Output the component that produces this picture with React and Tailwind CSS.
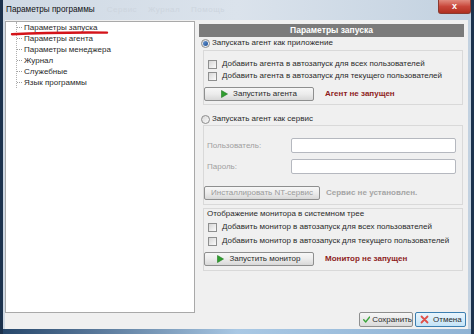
import React from 'react'

const Play = () => (
  <svg width="7" height="8" viewBox="0 0 7 8" className="mr-[5px]">
    <path d="M0.5 0.5 L6.5 4 L0.5 7.5 Z" fill="#2f9e2f" stroke="#1f7a1f" strokeWidth="0.6" />
  </svg>
)

function Radio({ checked, label }) {
  return (
    <div className="h-[12px] flex items-center pl-[3px]">
      <span className="w-[9px] h-[9px] rounded-full border border-[#8c8c8c] bg-gradient-to-br from-[#d9d9d9] to-[#fafafa] flex items-center justify-center mr-[2px]">
        {checked && <span className="w-[5px] h-[5px] rounded-full bg-gradient-to-br from-[#6a9ad6] to-[#1e4e92]" />}
      </span>
      <span>{label}</span>
    </div>
  )
}

function Check({ label, className = '' }) {
  return (
    <div className={`h-[12px] flex items-center pl-[4px] ${className}`}>
      <span className="w-[9px] h-[9px] border border-[#8e8f8f] bg-gradient-to-br from-[#d6d6d6] to-[#fbfbfb] mr-[5px]" />
      <span>{label}</span>
    </div>
  )
}

function Btn({ w, children, disabled }) {
  return (
    <div
      style={{ width: w }}
      className={`h-[14px] rounded-[2px] border border-[#8e8f8f] bg-gradient-to-b from-[#f7f7f7] via-[#ececec] to-[#d8d8d8] flex items-center justify-center ${disabled ? 'text-[#9a9a9a]' : ''}`}
    >
      {children}
    </div>
  )
}

function TreeItem({ label }) {
  return (
    <div className="h-[11px] flex items-center">
      <span className="w-[5px] border-t border-dotted border-[#a0a0a0] mr-[2px]" />
      <span>{label}</span>
    </div>
  )
}

export default function App() {
  return (
    <div className="w-[474px] h-[334px] relative overflow-hidden bg-[#1c324d] font-['Liberation_Sans',Arial,sans-serif] text-[8px] text-[#2a2a2a] leading-none">
      <div className="ml-[3px] w-[468px] h-[334px] flex flex-col bg-gradient-to-r from-[#cfd9e4] via-[#dbe3ec] to-[#c2d1e0]">
        {/* title bar */}
        <div className="h-[20px] flex items-start relative">
          <span className="mt-[6px] ml-[3px] text-[8.2px] text-[#111]">Параметры программы</span>
          <span className="mt-[6px] ml-[12px] text-[8px] text-[#cdd5de] tracking-[0.5px]">Сервис&nbsp;&nbsp;&nbsp;&nbsp;Журнал&nbsp;&nbsp;&nbsp;&nbsp;Помощь</span>
          <div className="flex-1" />
          <div className="w-[33px] h-[14px] rounded-b-[3px] bg-gradient-to-b from-[#e08a7e] via-[#c8463a] to-[#b0301f] border border-[#8a3a30] border-t-0 flex items-center justify-center text-white text-[9px] font-bold">
            x
          </div>
        </div>

        {/* client */}
        <div className="ml-[2px] mr-[3px] h-[309px] bg-[#f0f0f0] flex flex-col">
          <div className="h-[292px] mt-[1px] flex">
            <div className="w-[190px] bg-white border border-[#a9a9a9] pl-[9px]">
              <div className="ml-[1px] border-l border-dotted border-[#b0b0b0] w-fit pr-2">
                <TreeItem label="Параметры запуска" />
                <TreeItem label="Параметры агента" />
                <TreeItem label="Параметры менеджера" />
                <TreeItem label="Журнал" />
                <TreeItem label="Служебные" />
                <TreeItem label="Язык программы" />
              </div>
            </div>

            <div className="w-[268px] ml-[3px] pt-[3px] flex flex-col">
              <div className="h-[13px] ml-[1px] mr-[2px] bg-[#7b7b7b] text-white font-bold text-[8.5px] flex items-center justify-center">
                Параметры запуска
              </div>
              <Radio checked label="Запускать агент как приложение" />

              <div className="mt-[1px] ml-[5px] mr-[3px] border border-[#d9d9d9] pt-[7px] pb-[3px]">
                <Check label="Добавить агента в автозапуск для всех пользователей" />
                <Check label="Добавить агента в автозапуск для текущего пользователей" />
                <div className="mt-[5px] flex items-center">
                  <Btn w={110}>
                    <Play />
                    Запустить агента
                  </Btn>
                  <span className="ml-[11px] font-bold text-[#8e1c1c]">Агент не запущен</span>
                </div>
              </div>

              <div className="mt-[8px]">
                <Radio label="Запускать агент как сервис" />
              </div>

              <div className="ml-[5px] mr-[3px] border border-[#d9d9d9] pt-[12px] pb-[4px] text-[#a0a0a0]">
                <div className="flex items-center pl-[3px]">
                  <span className="w-[84px]">Пользователь:</span>
                  <span className="w-[165px] h-[15px] bg-white border border-[#b5b8bf] rounded-[2px]" />
                </div>
                <div className="mt-[6px] flex items-center pl-[3px]">
                  <span className="w-[84px]">Пароль:</span>
                  <span className="w-[165px] h-[15px] bg-white border border-[#b5b8bf] rounded-[2px]" />
                </div>
                <div className="mt-[12px] flex items-center">
                  <Btn w={116} disabled>
                    Инсталлировать NT-сервис
                  </Btn>
                  <span className="ml-[6px] font-bold text-[#a5a5a5]">Сервис не установлен.</span>
                </div>
              </div>

              <div className="mt-[3px] ml-[5px] mr-[3px] border border-[#d9d9d9] pb-[4px]">
                <div className="h-[9px] flex items-center pl-[3px]">Отображение монитора в системном трее</div>
                <Check className="mt-[3px]" label="Добавить монитор в автозапуск для всех пользователей" />
                <Check className="mt-[2px]" label="Добавить монитор в автозапуск для текущего пользователей" />
                <div className="mt-[5px] flex items-center">
                  <Btn w={110}>
                    <Play />
                    Запустить монитор
                  </Btn>
                  <span className="ml-[11px] font-bold text-[#8e1c1c]">Монитор не запущен</span>
                </div>
              </div>
            </div>
          </div>

          <div className="-mt-[1px] h-[15px] flex justify-end gap-[2px] pr-[2px]">
            <div className="w-[54px] h-[15px] rounded-[2px] border border-[#8e8f8f] bg-gradient-to-b from-[#f7f7f7] to-[#dadada] flex items-center pl-[3px]">
              <svg width="10" height="9" viewBox="0 0 10 9" className="mr-[2px]">
                <path d="M1 5 L3.8 7.8 L9 1.2" fill="none" stroke="#3aa53a" strokeWidth="2" strokeLinecap="round" strokeLinejoin="round" />
              </svg>
              Сохранить
            </div>
            <div className="w-[51px] h-[15px] rounded-[2px] border border-[#3c7fb1] bg-gradient-to-b from-[#eaf6fd] to-[#c4e3f7] flex items-center pl-[4px]">
              <svg width="9" height="9" viewBox="0 0 9 9" className="mr-[4px]">
                <path d="M1.5 1.5 L7.5 7.5 M7.5 1.5 L1.5 7.5" stroke="#e0504a" strokeWidth="1.8" strokeLinecap="round" />
              </svg>
              Отмена
            </div>
          </div>
        </div>

        <div className="flex-1 bg-gradient-to-r from-[#27476b] via-[#a9c8e4] to-[#8fb3d4]" />
      </div>

      <svg className="absolute left-[10px] top-[29px]" width="100" height="8" viewBox="0 0 100 8">
        <path d="M2 5.2 Q 40 3.2 97 3.6" fill="none" stroke="#d4141a" strokeWidth="2.4" strokeLinecap="round" />
      </svg>
    </div>
  )
}
